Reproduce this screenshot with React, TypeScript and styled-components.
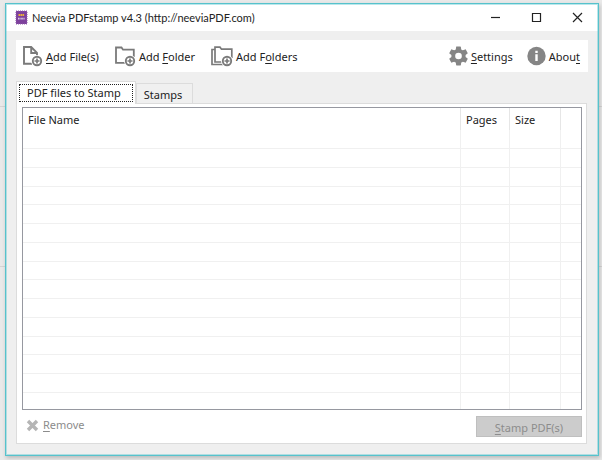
import React, { useState } from "react";
import styled, { createGlobalStyle } from "styled-components";

const GlobalStyle = createGlobalStyle`
  * { box-sizing: border-box; }
  body { margin: 0; background: #e9e9e9; }
  body, button, table { font-family: "Noto Sans", "Open Sans", sans-serif; font-size: 11px; line-height: 16px; color: #222; }
  button { margin: 0; padding: 0; border: 0; background: none; white-space: nowrap; }
`;

const Desktop = styled.div`
  display: flex;
  min-height: 100vh;
  padding: 3px 3px 4px 5px;
  background:
    linear-gradient(#d4d4d4, #d4d4d4) 0 106px / 100% 1px no-repeat,
    linear-gradient(#d4d4d4, #d4d4d4) 0 266px / 100% 1px no-repeat,
    #e9e9e9;
`;

const Window = styled.main`
  flex: 1;
  display: flex;
  flex-direction: column;
  min-width: 0;
  border: 1px solid #56c2cc;
  outline: 1px solid rgba(86, 194, 204, 0.4);
  outline-offset: -2px;
  background: #efefef;
  box-shadow: 1px 2px 4px rgba(0, 0, 0, 0.2);
`;

const TitleBar = styled.header`
  display: flex;
  align-items: center;
  height: 27px;
  padding-left: 9px;
  background: #fff;
`;

const Title = styled.h1`
  flex: 1;
  margin: 0 0 0 4px;
  font-family: Lato, "Noto Sans", sans-serif;
  font-size: 11px;
  line-height: 16px;
  font-weight: 400;
  white-space: nowrap;
`;

const WindowButton = styled.button`
  display: flex;
  align-items: center;
  justify-content: center;
  width: 41px;
  height: 26px;
`;

const Toolbar = styled.nav`
  display: flex;
  align-items: center;
  height: 32px;
  margin: 9px 10px 0;
  padding: 0 8px 0 6px;
  background: #fff;
`;

const ToolGroup = styled.div<{ $end?: boolean }>`
  display: flex;
  gap: ${(p) => (p.$end ? 14 : 16)}px;
  margin-left: ${(p) => (p.$end ? "auto" : "0")};
`;

const ToolButton = styled.button`
  display: flex;
  align-items: center;
  gap: 3px;
`;

const ToolLabel = styled.span`
  padding-top: 2px;
`;

const Key = styled.span`
  text-decoration: underline;
  text-underline-offset: 2px;
`;

const Tabs = styled.div`
  display: flex;
  align-items: flex-end;
  margin: 9px 10px 0;
`;

const Tab = styled.button<{ $active: boolean }>`
  position: relative;
  z-index: ${(p) => (p.$active ? 1 : 0)};
  height: ${(p) => (p.$active ? 23 : 20)}px;
  margin-bottom: ${(p) => (p.$active ? -1 : 0)}px;
  padding: ${(p) => (p.$active ? "1px 2px 2px" : "2px 10px 0 7px")};
  border: 1px solid #dcdcdc;
  border-bottom: 0;
  background: ${(p) => (p.$active ? "#fff" : "#f0f0f0")};
`;

const TabLabel = styled.span<{ $active: boolean }>`
  display: block;
  padding: ${(p) => (p.$active ? "0 11px 0 7px" : "0")};
  border: ${(p) => (p.$active ? "1px dotted #222" : "0")};
`;

const Panel = styled.section`
  flex: 1;
  display: flex;
  flex-direction: column;
  margin: 0 11px 11px 10px;
  padding: 3px 4px 0 5px;
  border: 1px solid #dcdcdc;
  background: #fff;
`;

const ListFrame = styled.div`
  flex: 1 0 303px;
  display: flex;
  flex-direction: column;
  height: 303px;
  overflow: hidden;
  border: 1px solid #9698a0;
`;

const FileTable = styled.table`
  width: 100%;
  table-layout: fixed;
  border-collapse: separate;
  border-spacing: 0;
`;

const HeadCell = styled.th<{ $width?: number }>`
  width: ${(p) => (p.$width ? `${p.$width}px` : "auto")};
  height: 22px;
  padding: 1px 0 0 5px;
  border-right: 1px solid #e6e6e6;
  font-weight: 400;
  text-align: left;
  &:last-child { border-right: 0; }
`;

const Row = styled.tr`
  height: 19px;
  &:nth-child(4n) { height: 18px; }
`;

const Cell = styled.td`
  padding: 0;
  border-right: 1px solid #f0f0f0;
  border-bottom: 1px solid #f0f0f0;
  &:last-child { border-right: 0; }
`;

const Footer = styled.footer`
  display: flex;
  align-items: flex-start;
  justify-content: space-between;
  height: 33px;
  padding: 6px 0 0 4px;
`;

const RemoveButton = styled.button`
  display: flex;
  align-items: center;
  gap: 4px;
  margin-top: 1px;
  color: #8c8c8c;
`;

const StampButton = styled.button`
  width: 106px;
  height: 21px;
  padding-top: 2px;
  border: 1px solid #bfbfbf;
  background: #cccccc;
  color: #8c8c8c;
`;

const PlusBadge = () => (
  <>
    <circle cx="15" cy="16" r="6" fill="#fff" />
    <circle cx="15" cy="16" r="4.2" fill="#fff" stroke="#7a7a7a" strokeWidth="1.9" />
    <path d="M15 13.5v5M12.5 16h5" stroke="#7a7a7a" strokeWidth="1.7" />
  </>
);

const AddFileIcon = () => (
  <svg width="21" height="22" viewBox="0 0 21 22" fill="none" aria-hidden="true">
    <path d="M10 18.7H2V2H9.2L15 7.8V12M9.2 2V8H14.6" stroke="#7a7a7a" strokeWidth="1.9" />
    <PlusBadge />
  </svg>
);

const AddFolderIcon = () => (
  <svg width="21" height="22" viewBox="0 0 21 22" fill="none" aria-hidden="true">
    <path d="M11 17.8H1V2.5H6.5L8 4.7H18.8V12" stroke="#7a7a7a" strokeWidth="1.8" />
    <PlusBadge />
  </svg>
);

const AddFoldersIcon = () => (
  <svg width="22" height="22" viewBox="0 0 22 22" fill="none" aria-hidden="true">
    <path d="M12 19.5H1V4.5H4M12 17H4V2.2H9L10.5 4.2H20.8V13" stroke="#7a7a7a" strokeWidth="1.7" />
    <g transform="translate(1 0)"><PlusBadge /></g>
  </svg>
);

const GearIcon = () => (
  <svg width="19" height="20" viewBox="2 2 20 20" fill="#858585" aria-hidden="true">
    <path d="M19.43 12.98c.04-.32.07-.64.07-.98s-.03-.66-.07-.98l2.11-1.65c.19-.15.24-.42.12-.64l-2-3.46c-.12-.22-.39-.3-.61-.22l-2.49 1c-.52-.4-1.08-.73-1.69-.98l-.38-2.65A.49.49 0 0 0 14 2h-4c-.25 0-.46.18-.49.42l-.38 2.65c-.61.25-1.17.59-1.69.98l-2.49-1c-.23-.09-.49 0-.61.22l-2 3.46c-.13.22-.07.49.12.64l2.11 1.65c-.04.32-.07.65-.07.98s.03.66.07.98l-2.11 1.65c-.19.15-.24.42-.12.64l2 3.46c.12.22.39.3.61.22l2.49-1c.52.4 1.08.73 1.69.98l.38 2.65c.03.24.24.42.49.42h4c.25 0 .46-.18.49-.42l.38-2.65c.61-.25 1.17-.59 1.69-.98l2.49 1c.23.09.49 0 .61-.22l2-3.46c.12-.22.07-.49-.12-.64l-2.11-1.65zM12 15.5a3.5 3.5 0 1 1 0-7 3.5 3.5 0 0 1 0 7z" />
  </svg>
);

const InfoIcon = () => (
  <svg width="19" height="20" viewBox="0 0 19 20" aria-hidden="true">
    <circle cx="9.5" cy="10" r="9.2" fill="#858585" />
    <path d="M8.3 4.7h2.4v2.2H8.3zM8.3 8.3h2.4v6.7H8.3z" fill="#fff" />
  </svg>
);

const AppIcon = () => (
  <svg width="13" height="15" viewBox="0 0 13 15" aria-hidden="true">
    <rect x="1" y="1" width="11" height="13" fill="#7d419c" />
    <rect x="1" y="1" width="11" height="13" fill="none" stroke="#8f5aaa" strokeDasharray="1 1" />
    <path d="M3.5 5h6" stroke="#e8b03a" strokeWidth="2" strokeDasharray="1.6 .4" />
    <path d="M3 8.7h7" stroke="#ddcbe6" strokeWidth="1.8" strokeDasharray="1 .4" />
  </svg>
);

const CrossIcon = () => (
  <svg width="13" height="13" viewBox="0 0 13 13" aria-hidden="true">
    <path d="M2 2l9 9M11 2l-9 9" stroke="#b5b5b5" strokeWidth="3.4" />
  </svg>
);

const windowIcons = [
  { label: "Minimize", d: "M1 5.5h9" },
  { label: "Maximize", d: "M1.5 1.5h8v8h-8z" },
  { label: "Close", d: "M1 1l9 9M10 1l-9 9" },
];

const columns = [
  { name: "File Name" },
  { name: "Pages", width: 49 },
  { name: "Size", width: 51 },
  { name: "", width: 20 },
];

const rows = Array.from({ length: 15 }, (_, i) => i);

export default function App() {
  const [tab, setTab] = useState(0);
  return (
    <>
      <GlobalStyle />
      <Desktop>
        <Window>
          <TitleBar>
            <AppIcon />
            <Title>Neevia PDFstamp v4.3 (http://neeviaPDF.com)</Title>
            {windowIcons.map((icon) => (
              <WindowButton key={icon.label} aria-label={icon.label}>
                <svg width="11" height="11" viewBox="0 0 11 11" fill="none" stroke="#222" strokeWidth="1.2">
                  <path d={icon.d} />
                </svg>
              </WindowButton>
            ))}
          </TitleBar>
          <Toolbar>
            <ToolGroup>
              <ToolButton><AddFileIcon /><ToolLabel><Key>A</Key>dd File(s)</ToolLabel></ToolButton>
              <ToolButton><AddFolderIcon /><ToolLabel>Add <Key>F</Key>older</ToolLabel></ToolButton>
              <ToolButton><AddFoldersIcon /><ToolLabel>Add F<Key>o</Key>lders</ToolLabel></ToolButton>
            </ToolGroup>
            <ToolGroup $end>
              <ToolButton><GearIcon /><ToolLabel><Key>S</Key>ettings</ToolLabel></ToolButton>
              <ToolButton><InfoIcon /><ToolLabel>Abou<Key>t</Key></ToolLabel></ToolButton>
            </ToolGroup>
          </Toolbar>
          <Tabs role="tablist">
            {["PDF files to Stamp", "Stamps"].map((name, i) => (
              <Tab key={name} role="tab" aria-selected={tab === i} $active={tab === i} onClick={() => setTab(i)}>
                <TabLabel $active={tab === i}>{name}</TabLabel>
              </Tab>
            ))}
          </Tabs>
          <Panel role="tabpanel">
            <ListFrame>
              <FileTable>
                <thead>
                  <tr>
                    {columns.map((c) => (
                      <HeadCell key={c.name} scope="col" $width={c.width}>{c.name}</HeadCell>
                    ))}
                  </tr>
                </thead>
                <tbody>
                  {rows.map((r) => (
                    <Row key={r}>
                      {columns.map((c) => <Cell key={c.name} />)}
                    </Row>
                  ))}
                </tbody>
              </FileTable>
            </ListFrame>
            <Footer>
              <RemoveButton disabled><CrossIcon /><span><Key>R</Key>emove</span></RemoveButton>
              <StampButton disabled><Key>S</Key>tamp PDF(s)</StampButton>
            </Footer>
          </Panel>
        </Window>
      </Desktop>
    </>
  );
}
